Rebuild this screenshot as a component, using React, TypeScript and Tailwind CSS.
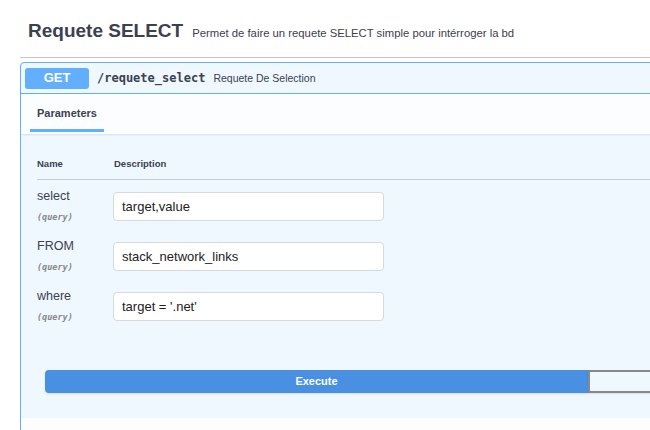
import React from 'react';

const params = [
  { name: 'select', value: 'target,value' },
  { name: 'FROM', value: 'stack_network_links' },
  { name: 'where', value: "target = '.net'" },
];

const sans = { fontFamily: '"Liberation Sans", Arial, sans-serif' };
const mono = { fontFamily: '"DejaVu Sans Mono", "Liberation Mono", monospace' };

export default function App() {
  return (
    <div className="w-[650px] h-[430px] overflow-hidden bg-white text-[#3b4151]" style={sans}>
      <div className="w-[1200px] pl-[20px]">
        {/* tag header */}
        <div className="flex items-baseline pl-[8px] pt-[18px] pb-[13px] border-b border-[rgba(59,65,81,0.3)]">
          <span className="text-[19px] leading-[26px] font-bold">Requete SELECT</span>
          <span className="ml-[9px] text-[11.3px]">Permet de faire un requete SELECT simple pour intérroger la bd</span>
        </div>

        {/* opblock */}
        <div className="mt-[4px] w-[1136px] border border-[#61affe] rounded-[4px] bg-[#eff7ff] overflow-hidden">
          <div className="flex items-center h-[31px] pl-[4px] border-b border-[#61affe]">
            <span className="w-[64px] h-[21px] rounded-[3px] bg-[#61affe] text-white text-[13px] font-bold flex items-center justify-center">
              GET
            </span>
            <span className="ml-[8px] text-[12px] font-semibold text-[#3b4151]" style={mono}>
              /requete_select
            </span>
            <span className="ml-[8px] text-[10.5px] mt-[1px]">Requete De Selection</span>
          </div>

          {/* tab header */}
          <div className="flex bg-[#fbfdff] pt-[13px] pb-[2px] px-[9px] shadow-[0_1px_2px_rgba(0,0,0,0.1)] relative">
            <div className="px-[7px] pb-[9px] border-b-[3px] border-[#61affe]">
              <span className="text-[11px] leading-[13px] font-bold block">Parameters</span>
            </div>
          </div>

          {/* body */}
          <div className="pt-[24px] pb-[25px]">
            <div className="pl-[16px]">
              <div className="flex border-b border-[#c5ccd8] pb-[9px] text-[9.5px] leading-[12px] font-bold">
                <div className="w-[77px]">Name</div>
                <div>Description</div>
              </div>
              {params.map((p) => (
                <div key={p.name} className="flex h-[50px]">
                  <div className="w-[76px] pt-[9px]">
                    <div className="text-[12.5px] leading-[15px]">{p.name}</div>
                    <div className="mt-[7px] text-[8.5px] leading-[12px] italic font-semibold text-[#888]" style={mono}>
                      (query)
                    </div>
                  </div>
                  <div className="pt-[12px]">
                    <div className="w-[271px] h-[29px] bg-white border border-[#d9d9d9] rounded-[4px] pl-[8px] flex items-center text-[13px] text-[#222]">
                      {p.value}
                    </div>
                  </div>
                </div>
              ))}
            </div>

            <div className="flex px-[24px] pt-[40px]">
              <button className="w-[543px] h-[23px] bg-[#4990e2] border-2 border-[#4990e2] rounded-l-[4px] text-white text-[11px] font-bold shadow-[0_1px_2px_rgba(0,0,0,0.1)]">
                Execute
              </button>
              <button
                aria-label="Clear"
                className="w-[543px] h-[23px] bg-transparent border-2 border-[#888] rounded-r-[4px] shadow-[0_1px_2px_rgba(0,0,0,0.1)]"
              />
            </div>
          </div>

          <div className="h-[40px] bg-[#fbfdff]" />
        </div>
      </div>
    </div>
  );
}
